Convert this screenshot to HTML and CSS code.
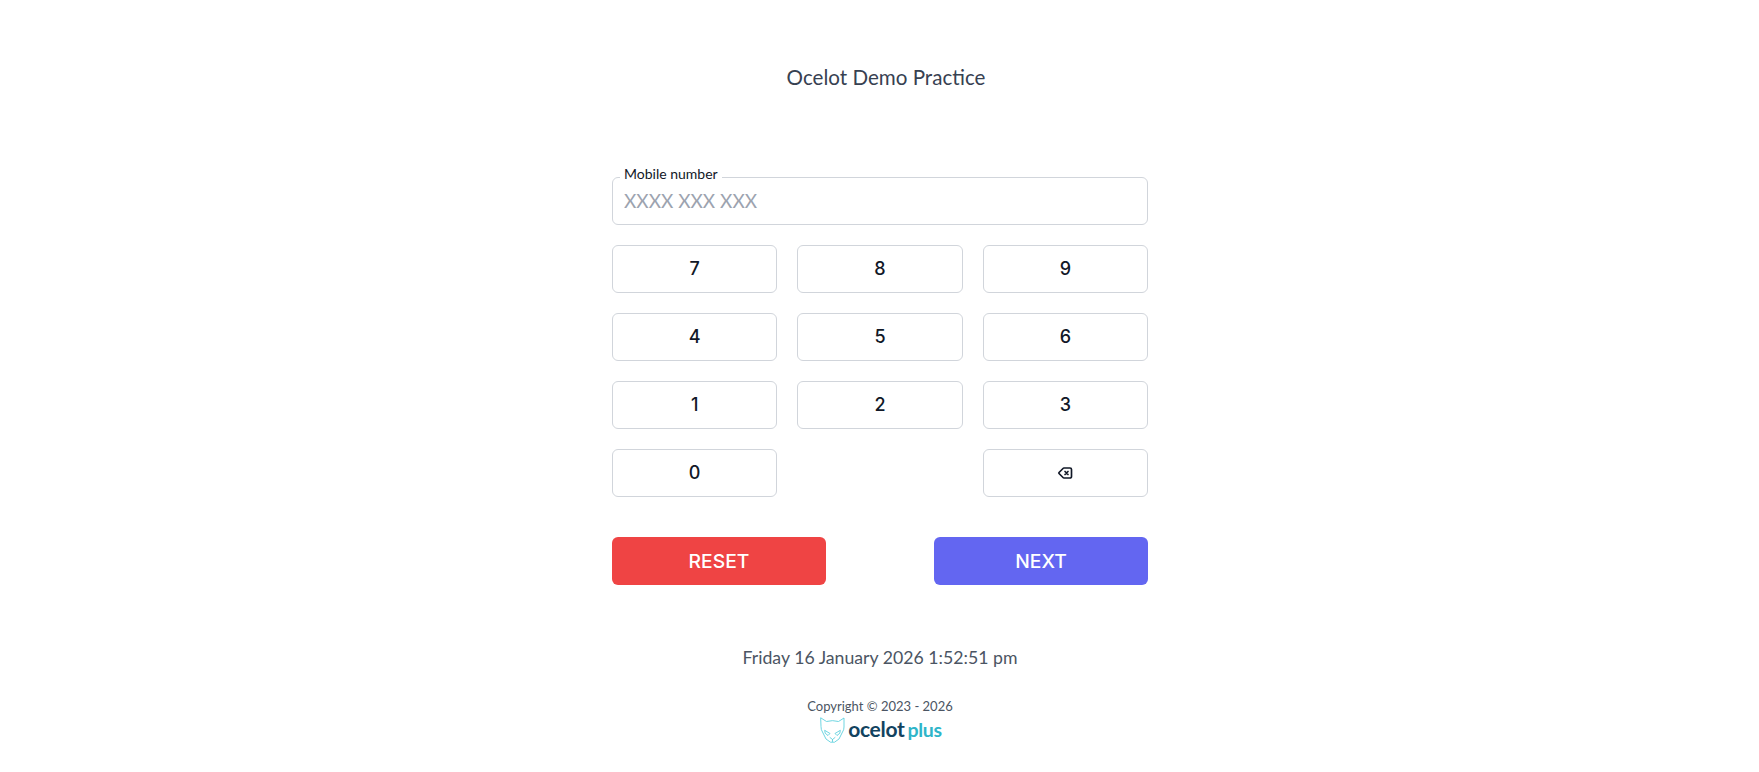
FILE: index.html
```html
<!DOCTYPE html>
<html lang="en">
  <head>
    <meta charset="UTF-8" />
    <title>Ocelot Demo Practice</title>
    <link rel="stylesheet" href="styles.css">
  </head>
  <body>
    <div class="page">
      <h1 class="title">Ocelot Demo Practice</h1>

      <div class="panel">
        <div class="field">
          <label for="mobile">Mobile number</label>
          <input type="text" id="mobile" placeholder="XXXX XXX XXX" />
        </div>

        <div class="keypad">
          <button class="key">7</button>
          <button class="key">8</button>
          <button class="key">9</button>
          <button class="key">4</button>
          <button class="key">5</button>
          <button class="key">6</button>
          <button class="key">1</button>
          <button class="key">2</button>
          <button class="key">3</button>
          <button class="key">0</button>
          <span></span>
          <button class="key" aria-label="Backspace">
            <svg class="back-icon" viewBox="0 0 24 24" fill="none" stroke="currentColor" stroke-width="2.5" stroke-linecap="round" stroke-linejoin="round">
              <path d="M12 9.75 14.25 12m0 0 2.25 2.25M14.25 12l2.25-2.25M14.25 12 12 14.25m-2.58 4.92-6.374-6.375a1.125 1.125 0 0 1 0-1.59L9.42 4.83c.21-.211.497-.33.795-.33H19.5a2.25 2.25 0 0 1 2.25 2.25v10.5a2.25 2.25 0 0 1-2.25 2.25h-9.284c-.298 0-.585-.119-.796-.33Z" />
            </svg>
          </button>
        </div>

        <div class="actions">
          <button class="action reset">RESET</button>
          <button class="action next">NEXT</button>
        </div>
      </div>

      <p class="clock">Friday 16 January 2026 1:52:51 pm</p>

      <footer class="footer">
        <p class="copyright">Copyright © 2023 - 2026</p>
        <div class="logo">
          <svg class="logo-cat" viewBox="0 0 25 26" fill="none" stroke="#5fd0de" stroke-width="0.9" stroke-linejoin="round" stroke-linecap="round">
            <path d="M1 1 L6.5 4.5 Q12.5 2.8 18.5 4.5 L24 1 L24 10 Q24 13 22.5 15 L19 22 L14.5 25.2 L10.5 25.2 L6 22 L2.5 15 Q1 13 1 10 Z" />
            <path d="M5 13.5 L10 16.5 L8 18.5 L5.5 16.5 Z M20 13.5 L15 16.5 L17 18.5 L19.5 16.5 Z" />
            <path d="M10 20.5 L12.5 22.5 L15 20.5 M12.5 22.5 V24.5" />
          </svg>
          <span class="logo-text">ocelot<span class="logo-plus">plus</span></span>
        </div>
      </footer>
    </div>
  </body>
</html>
```

FILE: styles.css
```css
* {
  box-sizing: border-box;
}
body {
  margin: 0;
  background: #fff;
  font-family: Lato, "Noto Sans", sans-serif;
  height: 772px;
  overflow: hidden;
}
.page {
  display: flex;
  flex-direction: column;
  align-items: center;
  padding-left: 1px;
}
.title {
  margin: 64px 0 0;
  padding-left: 12px;
  font-size: 20.6px;
  line-height: 26px;
  font-weight: 400;
  color: #374151;
}
.panel {
  width: 536px;
  margin-top: 87px;
}
.field {
  position: relative;
}
.field label {
  position: absolute;
  top: -13px;
  left: 8px;
  padding: 0 4px;
  background: #fff;
  font-size: 14px;
  line-height: 20px;
  color: #111827;
}
.field input {
  display: block;
  width: 100%;
  height: 48px;
  padding: 0 11px 2px;
  border: 1px solid #d1d5db;
  border-radius: 6px;
  font-family: inherit;
  font-size: 19px;
  color: #111827;
}
.field input::placeholder {
  color: #9ca3af;
}
.keypad {
  display: grid;
  grid-template-columns: repeat(3, 1fr);
  gap: 20px;
  margin-top: 20px;
}
.key {
  height: 48px;
  padding: 0 0 1px;
  border: 1px solid #d1d5db;
  border-radius: 6px;
  background: #fff;
  font-family: Inter, sans-serif;
  font-size: 18px;
  font-weight: 500;
  color: #111827;
}
.back-icon {
  display: block;
  width: 16px;
  height: 16px;
  margin: 0 auto;
}
.actions {
  display: flex;
  justify-content: space-between;
  margin-top: 40px;
}
.action {
  width: 214px;
  height: 48px;
  border: 0;
  border-radius: 6px;
  font-family: Inter, sans-serif;
  font-size: 19.3px;
  font-weight: 500;
  color: #fff;
}
.reset {
  background: #ef4444;
}
.next {
  background: #6366f1;
}
.clock {
  margin: 59px 0 0;
  font-size: 17.7px;
  line-height: 28px;
  color: #4b5563;
}
.footer {
  display: flex;
  flex-direction: column;
  align-items: center;
  margin-top: 24px;
}
.copyright {
  margin: 0;
  font-size: 13px;
  line-height: 20px;
  color: #4b5563;
}
.logo {
  display: flex;
  align-items: center;
  gap: 3px;
  margin-left: 2px;
}
.logo-cat {
  width: 25px;
  height: 26px;
}
.logo-text {
  font-family: Lato, sans-serif;
  font-size: 21px;
  font-weight: 700;
  line-height: 26px;
  letter-spacing: -0.3px;
  color: #12435f;
}
.logo-plus {
  margin-left: 3px;
  font-size: 19.5px;
  font-weight: 700;
  color: #2eb5c9;
}
```
